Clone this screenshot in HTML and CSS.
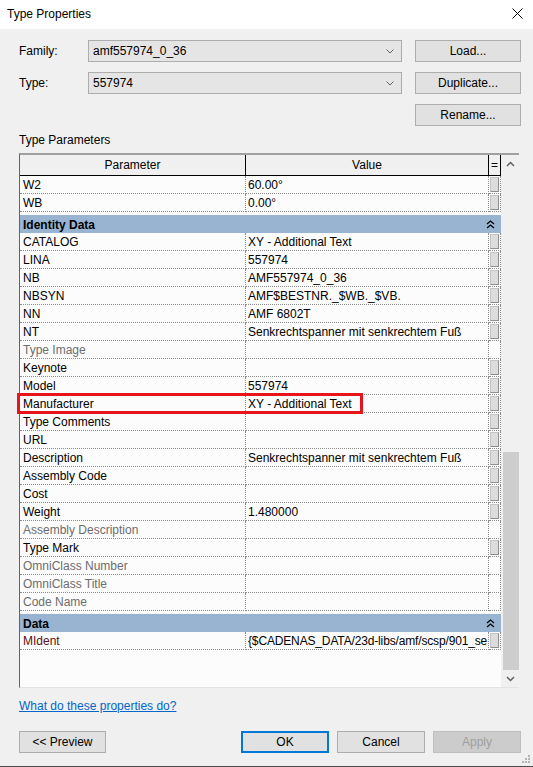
FILE: index.html
```html
<!DOCTYPE html>
<html lang="en">
<head>
  <meta charset="UTF-8">
  <title>Type Properties</title>
  <link rel="stylesheet" href="styles.css">
</head>
<body>
  <div class="dialog">
    <div class="titlebar">
      <span class="title">Type Properties</span>
      <svg class="close-icon" width="11" height="11" viewBox="0 0 11 11">
        <path d="M0.5 0.5 L10.5 10.5 M10.5 0.5 L0.5 10.5" stroke="#000" stroke-width="1" fill="none"/>
      </svg>
    </div>

    <div class="dialog-body">
      <div class="type-form">
        <span class="form-label">Family:</span>
        <div class="combo">
          <span>amf557974_0_36</span>
          <svg class="combo-arrow" width="8" height="5" viewBox="0 0 8 5"><path d="M0.5 0.5 L4 4 L7.5 0.5" stroke="#666" fill="none"/></svg>
        </div>
        <button class="btn">Load...</button>

        <span class="form-label">Type:</span>
        <div class="combo">
          <span>557974</span>
          <svg class="combo-arrow" width="8" height="5" viewBox="0 0 8 5"><path d="M0.5 0.5 L4 4 L7.5 0.5" stroke="#666" fill="none"/></svg>
        </div>
        <button class="btn">Duplicate...</button>

        <span></span>
        <span></span>
        <button class="btn">Rename...</button>
      </div>

      <div class="section-label">Type Parameters</div>

      <div class="grid-frame">
        <div class="grid-pane">
          <div class="grid-head">
            <div class="head-cell">Parameter</div>
            <div class="head-cell">Value</div>
            <div class="head-cell">=</div>
          </div>

          <div class="row"><div class="cell">W2</div><div class="cell">60.00°</div><div class="cell eq"><span class="eq-btn"></span></div></div>
          <div class="row"><div class="cell">WB</div><div class="cell">0.00°</div><div class="cell eq"><span class="eq-btn"></span></div></div>

          <div class="group">
            <span>Identity Data</span>
            <svg class="collapse" width="9" height="9" viewBox="0 0 9 9"><path d="M1 4 L4.5 1 L8 4 M1 8 L4.5 5 L8 8" stroke="#000" stroke-width="1.3" fill="none"/></svg>
          </div>

          <div class="row"><div class="cell">CATALOG</div><div class="cell">XY - Additional Text</div><div class="cell eq"><span class="eq-btn"></span></div></div>
          <div class="row"><div class="cell">LINA</div><div class="cell">557974</div><div class="cell eq"><span class="eq-btn"></span></div></div>
          <div class="row"><div class="cell">NB</div><div class="cell">AMF557974_0_36</div><div class="cell eq"><span class="eq-btn"></span></div></div>
          <div class="row"><div class="cell">NBSYN</div><div class="cell">AMF$BESTNR._$WB._$VB.</div><div class="cell eq"><span class="eq-btn"></span></div></div>
          <div class="row"><div class="cell">NN</div><div class="cell">AMF 6802T</div><div class="cell eq"><span class="eq-btn"></span></div></div>
          <div class="row"><div class="cell">NT</div><div class="cell">Senkrechtspanner mit senkrechtem Fuß</div><div class="cell eq"><span class="eq-btn"></span></div></div>
          <div class="row readonly"><div class="cell">Type Image</div><div class="cell"></div><div class="cell eq"></div></div>
          <div class="row"><div class="cell">Keynote</div><div class="cell"></div><div class="cell eq"><span class="eq-btn"></span></div></div>
          <div class="row"><div class="cell">Model</div><div class="cell">557974</div><div class="cell eq"><span class="eq-btn"></span></div></div>
          <div class="row"><div class="cell">Manufacturer</div><div class="cell">XY - Additional Text</div><div class="cell eq"><span class="eq-btn"></span></div></div>
          <div class="row"><div class="cell">Type Comments</div><div class="cell"></div><div class="cell eq"><span class="eq-btn"></span></div></div>
          <div class="row"><div class="cell">URL</div><div class="cell"></div><div class="cell eq"><span class="eq-btn"></span></div></div>
          <div class="row"><div class="cell">Description</div><div class="cell">Senkrechtspanner mit senkrechtem Fuß</div><div class="cell eq"><span class="eq-btn"></span></div></div>
          <div class="row"><div class="cell">Assembly Code</div><div class="cell"></div><div class="cell eq"><span class="eq-btn"></span></div></div>
          <div class="row"><div class="cell">Cost</div><div class="cell"></div><div class="cell eq"><span class="eq-btn"></span></div></div>
          <div class="row"><div class="cell">Weight</div><div class="cell">1.480000</div><div class="cell eq"><span class="eq-btn"></span></div></div>
          <div class="row readonly"><div class="cell">Assembly Description</div><div class="cell"></div><div class="cell eq"></div></div>
          <div class="row"><div class="cell">Type Mark</div><div class="cell"></div><div class="cell eq"><span class="eq-btn"></span></div></div>
          <div class="row readonly"><div class="cell">OmniClass Number</div><div class="cell"></div><div class="cell eq"></div></div>
          <div class="row readonly"><div class="cell">OmniClass Title</div><div class="cell"></div><div class="cell eq"></div></div>
          <div class="row readonly"><div class="cell">Code Name</div><div class="cell"></div><div class="cell eq"></div></div>

          <div class="group">
            <span>Data</span>
            <svg class="collapse" width="9" height="9" viewBox="0 0 9 9"><path d="M1 4 L4.5 1 L8 4 M1 8 L4.5 5 L8 8" stroke="#000" stroke-width="1.3" fill="none"/></svg>
          </div>

          <div class="row"><div class="cell shared">MIdent</div><div class="cell tight">{$CADENAS_DATA/23d-libs/amf/scsp/901_se</div><div class="cell eq"><span class="eq-btn"></span></div></div>
        </div>

        <div class="scrollbar">
          <div class="scroll-btn">
            <svg width="9" height="6" viewBox="0 0 9 6"><path d="M1 5 L4.5 1.5 L8 5" stroke="#606060" stroke-width="1.5" fill="none"/></svg>
          </div>
          <div class="scroll-track">
            <div class="scroll-thumb"></div>
          </div>
          <div class="scroll-btn">
            <svg width="9" height="6" viewBox="0 0 9 6"><path d="M1 1 L4.5 4.5 L8 1" stroke="#606060" stroke-width="1.5" fill="none"/></svg>
          </div>
        </div>

        <div class="highlight"></div>
      </div>

      <a href="#" class="help-link">What do these properties do?</a>

      <div class="footer">
        <button class="btn">&lt;&lt; Preview</button>
        <div class="footer-right">
          <button class="btn btn-default">OK</button>
          <button class="btn">Cancel</button>
          <button class="btn" disabled>Apply</button>
        </div>
      </div>
    </div>

    <svg class="grip" width="10" height="10" viewBox="0 0 10 10">
      <rect x="7" y="1" width="2" height="2" fill="#b4b4b4"/>
      <rect x="4" y="4" width="2" height="2" fill="#b4b4b4"/>
      <rect x="7" y="4" width="2" height="2" fill="#b4b4b4"/>
      <rect x="1" y="7" width="2" height="2" fill="#b4b4b4"/>
      <rect x="4" y="7" width="2" height="2" fill="#b4b4b4"/>
      <rect x="7" y="7" width="2" height="2" fill="#b4b4b4"/>
    </svg>
  </div>
</body>
</html>
```

FILE: styles.css
```css
* {
  margin: 0;
  padding: 0;
  box-sizing: border-box;
}

body {
  width: 533px;
  height: 767px;
  font-family: "Segoe UI", "Liberation Sans", Arial, sans-serif;
  font-size: 12px;
  color: #000;
  background: #f0f0f0;
  overflow: hidden;
}

.dialog {
  position: relative;
  height: 767px;
  border-bottom: 1px solid #4a4a4a;
}

.titlebar {
  display: flex;
  align-items: center;
  justify-content: space-between;
  height: 29px;
  padding: 0 10px 2px 7px;
  background: #fff;
}

.close-icon {
  display: block;
}

.dialog-body {
  padding: 11px 12px 0 19px;
}

.type-form {
  display: grid;
  grid-template-columns: 56px 314px 106px;
  grid-auto-rows: 22px;
  column-gap: 13px;
  row-gap: 10px;
  align-items: center;
}

.combo {
  display: flex;
  align-items: center;
  justify-content: space-between;
  height: 22px;
  padding: 0 7px 0 4px;
  background: #e5e5e5;
  border: 1px solid #adadad;
}

.combo-arrow {
  display: block;
}

.btn {
  height: 22px;
  font-family: inherit;
  font-size: 12px;
  color: #000;
  background: #e1e1e1;
  border: 1px solid #adadad;
}

.btn:disabled {
  color: #a0a0a0;
  background: #cccccc;
  border-color: #bfbfbf;
}

.btn-default {
  border: 2px solid #0078d7;
}

.section-label {
  margin-top: 6px;
  height: 16px;
  line-height: 16px;
}

.grid-frame {
  position: relative;
  display: flex;
  margin-top: 5px;
  width: 500px;
  height: 535px;
  border-top: 2px solid #a0a0a0;
  border-left: 1px solid #646464;
  border-bottom: 1px solid #e3e3e3;
}

.grid-pane {
  width: 481px;
  background: #fcfcfc;
}

.grid-head {
  display: grid;
  grid-template-columns: 226px 243px 12px;
  height: 21px;
  background: #f0f0f0;
  border-bottom: 1px solid #000;
}

.head-cell {
  text-align: center;
  line-height: 20px;
  border-right: 1px solid #000;
}

.row {
  display: grid;
  grid-template-columns: 226px 243px 12px;
  height: 18px;
}

.cell {
  padding-left: 3px;
  line-height: 19px;
  white-space: nowrap;
  overflow: hidden;
  border-bottom: 1px dotted #8c8c8c;
  border-right: 1px dotted #8c8c8c;
}

.cell:nth-child(2) {
  padding-left: 2px;
}

.cell.tight {
  letter-spacing: -0.15px;
}

.cell.eq {
  padding-left: 1px;
}

.eq-btn {
  display: block;
  width: 9px;
  height: 15px;
  margin-top: 1px;
  background: #dcdcdc;
  border: 1px solid;
  border-color: #c4c4c4 #8e8e8e #8e8e8e #c4c4c4;
}

.readonly .cell {
  color: #6d6d6d;
}

.shared {
  color: #5c1010;
}

.group {
  display: flex;
  align-items: center;
  justify-content: space-between;
  height: 18px;
  margin-top: 3px;
  padding: 1px 6px 0 3px;
  background: #99b4d1;
  font-weight: bold;
}

.collapse {
  display: block;
}

.scrollbar {
  display: flex;
  flex-direction: column;
  width: 18px;
  background: #f0f0f0;
}

.scroll-btn {
  display: flex;
  align-items: center;
  justify-content: center;
  height: 17px;
  padding-left: 1px;
}

.scroll-track {
  flex: 1;
  display: flex;
  flex-direction: column;
  justify-content: flex-end;
  padding-left: 2px;
}

.scroll-thumb {
  height: 218px;
  background: #cdcdcd;
}

.highlight {
  position: absolute;
  top: 238px;
  left: -3px;
  width: 346px;
  height: 21px;
  border: 3px solid #e8141c;
}

.help-link {
  display: inline-block;
  margin-top: 10px;
  height: 16px;
  line-height: 16px;
  color: #0066cc;
}

.footer {
  display: flex;
  justify-content: space-between;
  margin-top: 17px;
}

.footer .btn {
  width: 88px;
}

.footer > .btn {
  width: 87px;
}

.footer-right {
  display: flex;
  gap: 8px;
}

.grip {
  position: absolute;
  right: 2px;
  bottom: 2px;
}
```
